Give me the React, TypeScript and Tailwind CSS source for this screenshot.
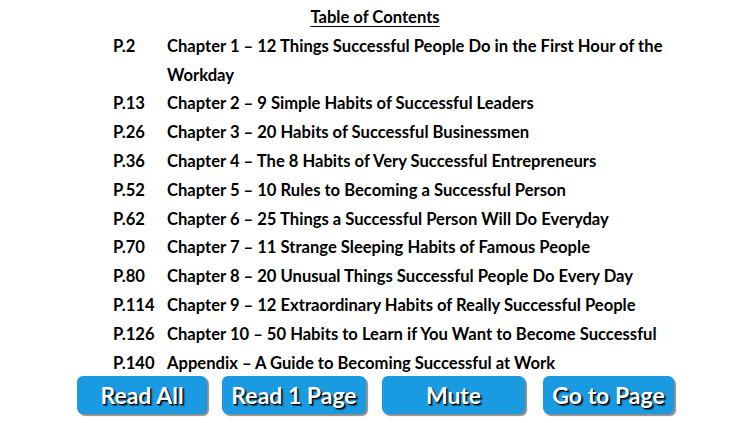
import React from "react";

const rows: [string, React.ReactNode][] = [
  ["P.2", <>Chapter 1 – 12 Things Successful People Do in the First Hour of the<br />Workday</>],
  ["P.13", "Chapter 2 – 9 Simple Habits of Successful Leaders"],
  ["P.26", "Chapter 3 – 20 Habits of Successful Businessmen"],
  ["P.36", "Chapter 4 – The 8 Habits of Very Successful Entrepreneurs"],
  ["P.52", "Chapter 5 – 10 Rules to Becoming a Successful Person"],
  ["P.62", "Chapter 6 – 25 Things a Successful Person Will Do Everyday"],
  ["P.70", "Chapter 7 – 11 Strange Sleeping Habits of Famous People"],
  ["P.80", "Chapter 8 – 20 Unusual Things Successful People Do Every Day"],
  ["P.114", "Chapter 9 – 12 Extraordinary Habits of Really Successful People"],
  ["P.126", "Chapter 10 – 50 Habits to Learn if You Want to Become Successful"],
  ["P.140", "Appendix – A Guide to Becoming Successful at Work"],
];

function Btn({ label, w, ml }: { label: string; w: string; ml: string }) {
  return (
    <div
      className={`${w} ${ml} h-[38px] rounded-[6px] bg-[#1a9ae0] flex items-center justify-center whitespace-nowrap text-white text-[23px] font-bold shadow-[2px_2px_1px_rgba(0,0,0,0.45)]`}
      style={{
        fontFamily: 'Lato, sans-serif',
        textShadow: "1px 1px 0 #000, 2px 2px 1px rgba(0,0,0,0.6)",
      }}
    >
      {label}
    </div>
  );
}

export default function App() {
  return (
    <div className="w-[750px] h-[423px] bg-white overflow-hidden text-black" style={{ fontFamily: "Lato, sans-serif" }}>
      <div className="pt-[3px] text-[16.6px] font-bold leading-[28.8px]">
        <div className="text-center underline underline-offset-[3px] decoration-1">Table of Contents</div>
        <div className="pl-[113px] grid grid-cols-[54px_1fr]">
          {rows.map(([p, t], i) => (
            <React.Fragment key={i}>
              <div>{p}</div>
              <div className="whitespace-nowrap">{t}</div>
            </React.Fragment>
          ))}
        </div>
      </div>
      <div className="flex -mt-[1px]">
        <Btn label="Read All" w="w-[130px]" ml="ml-[77px]" />
        <Btn label="Read 1 Page" w="w-[144px]" ml="ml-[15px]" />
        <Btn label="Mute" w="w-[143px]" ml="ml-[16px]" />
        <Btn label="Go to Page" w="w-[131px]" ml="ml-[18px]" />
      </div>
    </div>
  );
}
